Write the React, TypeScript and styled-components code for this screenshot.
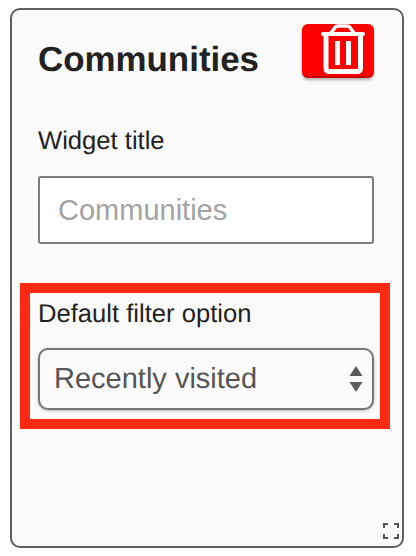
import styled, { createGlobalStyle } from "styled-components"

const GlobalStyle = createGlobalStyle`
  html, body {
    margin: 0;
    background: #fff;
  }
  body {
    font-family: "Liberation Sans", Arial, sans-serif;
    text-rendering: geometricPrecision;
  }
`

const Page = styled.div`
  width: 416px;
  height: 556px;
  padding: 8px 12px 8px 10px;
  box-sizing: border-box;
  overflow: hidden;
`

const Card = styled.div`
  position: relative;
  height: 540px;
  box-sizing: border-box;
  border: 2px solid #5f5f5f;
  border-radius: 10px;
  background: #fafafa;
  padding: 14px 28px 0 26px;
`

const Header = styled.div`
  display: flex;
  justify-content: space-between;
  align-items: flex-start;
  height: 88px;
`

const Title = styled.h2`
  margin: 17px 0 0;
  font-size: 34.9px;
  line-height: 37px;
  font-weight: 700;
  color: #222;
`

const DeleteBtn = styled.button`
  width: 72px;
  height: 54px;
  padding: 0 0 0 10px;
  border: 0;
  border-bottom: 2px solid #cc0000;
  border-radius: 6px;
  background: #ff0000;
  box-shadow: 0 2px 3px rgba(0, 0, 0, .3);
  display: flex;
  align-items: flex-start;
  justify-content: center;
  box-sizing: border-box;
`

const Label = styled.label`
  display: block;
  font-size: 25.6px;
  line-height: 28px;
  color: #222;
`

const TitleField = styled.div`
  margin-top: 15px;
  display: flex;
  flex-direction: column;
  gap: 21px;
`

const TextInput = styled.input`
  width: 100%;
  height: 68px;
  box-sizing: border-box;
  border: 2px solid #7d7d7d;
  border-radius: 3px;
  background: #fff;
  padding: 0 18px;
  font-family: inherit;
  font-size: 29px;
  &::placeholder {
    color: #a3a3a3;
    opacity: 1;
  }
`

const Highlight = styled.div`
  margin: 39px -16px 0 -18px;
  border: 10px solid #ff2a14;
  padding: 7px 6px 9px 8px;
  height: 146px;
  box-sizing: border-box;
`

const FilterLabel = styled(Label)`
  margin-bottom: 20px;
`

const SelectBox = styled.div`
  display: flex;
  align-items: center;
  justify-content: space-between;
  height: 62px;
  box-sizing: border-box;
  border: 2px solid #777;
  border-radius: 10px;
  background: #fbfbfb;
  box-shadow: 0 1px 3px rgba(0, 0, 0, .25);
  padding: 0 9px 0 14px;
  font-size: 29px;
  color: #555;
`

const Expand = styled.svg`
  position: absolute;
  right: 3px;
  bottom: 7px;
`

function TrashIcon() {
  return (
    <svg width="46" height="52" viewBox="0 0 46 52" fill="none" stroke="#fff" strokeLinejoin="round">
      <path d="M3 10 H43" strokeWidth="4" strokeLinecap="round" />
      <path d="M11 9 L15 3.5 Q16 2 18 2 H27 Q29 2 30 3.5 L34 9" strokeWidth="3.5" />
      <path d="M6 11 V44 Q6 47.5 9.5 47.5 H37 Q40.5 47.5 40.5 44 V11" strokeWidth="5" />
      <path d="M17.5 17 V41 M28.5 17 V41" strokeWidth="5" />
    </svg>
  )
}

function SortArrows() {
  return (
    <svg width="14" height="28" viewBox="0 0 14 28" fill="#5c5c5c">
      <path d="M7 1 L13.5 11 H.5 Z" />
      <path d="M.5 17 H13.5 L7 27 Z" />
    </svg>
  )
}

export default function App() {
  return (
    <Page>
      <GlobalStyle />
      <Card>
        <Header>
          <Title>Communities</Title>
          <DeleteBtn aria-label="Delete">
            <TrashIcon />
          </DeleteBtn>
        </Header>
        <TitleField>
          <Label>Widget title</Label>
          <TextInput placeholder="Communities" readOnly />
        </TitleField>
        <Highlight>
          <FilterLabel>Default filter option</FilterLabel>
          <SelectBox>
            <span>Recently visited</span>
            <SortArrows />
          </SelectBox>
        </Highlight>
        <Expand width="16" height="16" viewBox="0 0 16 16" fill="none" stroke="#555" strokeWidth="2">
          <path d="M1 5 V1 H5 M11 1 H15 V5 M15 11 V15 H11 M5 15 H1 V11" />
        </Expand>
      </Card>
    </Page>
  )
}
